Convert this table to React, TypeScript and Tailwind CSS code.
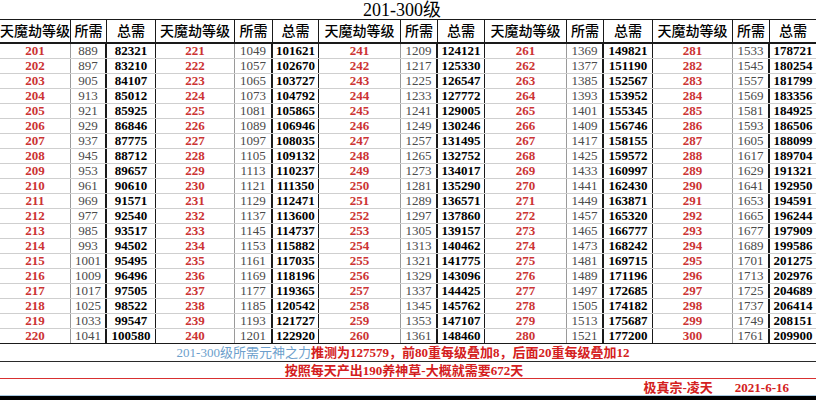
import React from "react";

type Col = { lvl: string; need: string; total: string };

const COLS: Col[] = [
  { lvl: "w-[71px]", need: "w-[36px]", total: "w-[49px]" },
  { lvl: "w-[79px]", need: "w-[38px]", total: "w-[46px]" },
  { lvl: "w-[82px]", need: "w-[37px]", total: "w-[47px]" },
  { lvl: "w-[82px]", need: "w-[37px]", total: "w-[49px]" },
  { lvl: "w-[80px]", need: "w-[37px]", total: "w-[46px]" },
];

function buildData() {
  const need: Record<number, number> = {};
  const total: Record<number, number> = {};
  for (let lv = 201; lv <= 300; lv++) {
    need[lv] = lv <= 280 ? 889 + (lv - 201) * 8 : 1521 + (lv - 280) * 12;
  }
  total[201] = 82321;
  for (let lv = 202; lv <= 300; lv++) total[lv] = total[lv - 1] + need[lv - 1];
  return { need, total };
}

export default function App() {
  const { need, total } = buildData();
  const rows = Array.from({ length: 20 }, (_, i) => i);
  return (
    <div className="w-[816px] h-[400px] bg-white overflow-hidden font-['Liberation_Serif','Noto_Sans_CJK_SC',serif] text-black">
      {/* title */}
      <div className="h-[19px] flex justify-center pr-[12px] text-[18px] leading-[20px]">
        201-300级
      </div>

      {/* header */}
      <div className="flex h-[25px] border-t border-b-2 border-[#1a1a1a]">
        {COLS.map((c, g) => (
          <React.Fragment key={g}>
            <div className={`${c.lvl} shrink-0 flex items-center justify-center border-r border-[#1a1a1a] text-[14px] font-medium whitespace-nowrap`}>
              天魔劫等级
            </div>
            <div className={`${c.need} shrink-0 flex items-center justify-center border-r border-[#1a1a1a] text-[14px] font-medium whitespace-nowrap`}>
              所需
            </div>
            <div className={`${c.total} shrink-0 flex items-center justify-center ${g < 4 ? "border-r border-[#1a1a1a]" : ""} text-[14px] font-medium whitespace-nowrap`}>
              总需
            </div>
          </React.Fragment>
        ))}
      </div>

      {/* data rows */}
      {rows.map((r) => (
        <div
          key={r}
          className={`flex h-[15px] border-b ${r === 19 ? "border-[#1a1a1a]" : "border-[#cfcfcf]"} text-[13px] leading-[14px]`}
        >
          {COLS.map((c, g) => {
            const lv = 201 + g * 20 + r;
            return (
              <React.Fragment key={g}>
                <div className={`${c.lvl} shrink-0 flex items-center justify-center border-r border-[#9a9a9a] text-[#cc3333] font-bold`}>
                  {lv}
                </div>
                <div className={`${c.need} shrink-0 flex items-center justify-center border-r-2 border-[#1a1a1a] text-[#4a4a4a]`}>
                  {need[lv]}
                </div>
                <div className={`${c.total} shrink-0 flex items-center justify-center ${g < 4 ? "border-r border-[#1a1a1a]" : ""} font-bold`}>
                  {total[lv]}
                </div>
              </React.Fragment>
            );
          })}
        </div>
      ))}

      {/* note row */}
      <div className="h-[18px] flex items-center justify-center pr-[10px] border-b border-[#2a2a2a] text-[13px] leading-[16px] font-bold whitespace-nowrap">
        <span className="text-[#6d9fcc] font-normal">201-300级所需元神之力</span>
        <span className="text-[#d42020]">推测为127579，前80重每级叠加8，后面20重每级叠加12</span>
      </div>

      <div className="h-[17px] flex items-center justify-center pr-[8px] border-b border-[#d83030] text-[13px] leading-[15px] font-bold text-[#d42020] whitespace-nowrap">
        按照每天产出190养神草-大概就需要672天
      </div>

      <div className="h-[17px] flex items-center justify-end pr-[27px] gap-[22px] border-b border-[#a8c8e0] text-[13px] leading-[15px] font-bold text-[#d42020] whitespace-nowrap">
        <span>极真宗-凌天</span>
        <span>2021-6-16</span>
      </div>

      <div className="h-[4px] bg-black" />
    </div>
  );
}
